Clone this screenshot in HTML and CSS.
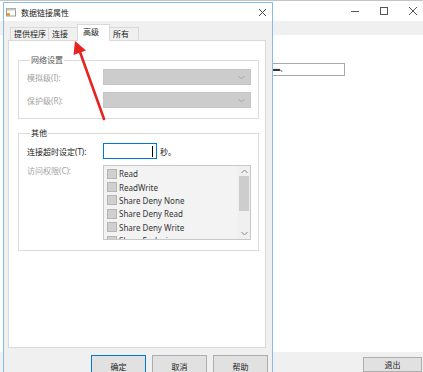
FILE: index.html
```html
<!DOCTYPE html>
<html lang="zh-CN">
<head>
  <meta charset="UTF-8">
  <title>数据链接属性</title>
  <link rel="stylesheet" href="styles.css">
</head>
<body>
  <div class="app">
    <div class="app-title">
      <svg class="ctl" width="10" height="10" viewBox="0 0 10 10"><path d="M1 5.5h8" stroke="#555" stroke-width="1"/></svg>
      <svg class="ctl" width="10" height="10" viewBox="0 0 10 10"><rect x="1.5" y="1.5" width="7" height="7" fill="none" stroke="#555" stroke-width="1"/></svg>
      <svg class="ctl" width="10" height="10" viewBox="0 0 10 10"><path d="M1 1l8 8M9 1l-8 8" stroke="#555" stroke-width="1"/></svg>
    </div>
    <div class="app-band"></div>
    <div class="app-body">
      <div class="app-field"><span class="app-val">▬、</span></div>
    </div>
    <div class="app-foot">
      <button class="btn">退出</button>
    </div>
  </div>

  <div class="dialog">
    <div class="dlg-title">
      <svg class="dlg-icon" width="10" height="10" viewBox="0 0 10 10">
        <rect x="0.5" y="1.5" width="9" height="7.5" fill="#fff" stroke="#9a9a9a"/>
        <rect x="0.5" y="1.5" width="9" height="2" fill="#c8c8c8"/>
        <rect x="1" y="6" width="3" height="3" fill="#e8a23a"/>
      </svg>
      <span class="dlg-name">数据链接属性</span>
      <svg class="dlg-close" width="9" height="9" viewBox="0 0 9 9"><path d="M1 1l7 7M8 1l-7 7" stroke="#444" stroke-width="1"/></svg>
    </div>
    <div class="dlg-body">
      <div class="tabs">
        <div class="tab t1">提供程序</div>
        <div class="tab t2">连接</div>
        <div class="tab t3 active">高级</div>
        <div class="tab t4">所有</div>
      </div>
      <div class="page">
        <fieldset class="group">
          <legend class="muted-legend">网络设置</legend>
          <div class="row">
            <span class="lbl disabled">模拟级(I):</span>
            <div class="combo"><svg width="7" height="5" viewBox="0 0 7 5"><path d="M0.5 1l3 3 3-3" fill="none" stroke="#a8a8a8"/></svg></div>
          </div>
          <div class="row">
            <span class="lbl disabled">保护级(R):</span>
            <div class="combo"><svg width="7" height="5" viewBox="0 0 7 5"><path d="M0.5 1l3 3 3-3" fill="none" stroke="#a8a8a8"/></svg></div>
          </div>
        </fieldset>

        <fieldset class="group other">
          <legend>其他</legend>
          <div class="row timeout">
            <span class="lbl">连接超时设定(T):</span>
            <div class="textbox"><span class="caret"></span></div>
            <span class="unit">秒。</span>
          </div>
          <div class="row access">
            <span class="lbl disabled">访问权限(C):</span>
            <div class="listbox">
              <ul class="items">
                <li><span class="chk"></span>Read</li>
                <li><span class="chk"></span>ReadWrite</li>
                <li><span class="chk"></span>Share Deny None</li>
                <li><span class="chk"></span>Share Deny Read</li>
                <li><span class="chk"></span>Share Deny Write</li>
                <li><span class="chk"></span>Share Exclusive</li>
              </ul>
              <div class="vscroll">
                <svg width="7" height="5" viewBox="0 0 7 5"><path d="M0.5 4l3-3 3 3" fill="none" stroke="#888"/></svg>
                <div class="thumb"></div>
                <svg class="down" width="7" height="5" viewBox="0 0 7 5"><path d="M0.5 1l3 3 3-3" fill="none" stroke="#888"/></svg>
              </div>
            </div>
          </div>
        </fieldset>
      </div>
      <div class="buttons">
        <button class="btn default">确定</button>
        <button class="btn">取消</button>
        <button class="btn">帮助</button>
      </div>
    </div>
  </div>

  <svg class="arrow" width="423" height="372" viewBox="0 0 423 372">
    <path d="M104 119L80 52" stroke="#e52421" stroke-width="2.6" stroke-linecap="round"/>
    <path d="M75 41L73.5 55L86 50.5Z" fill="#e52421"/>
  </svg>
</body>
</html>
```

FILE: styles.css
```css
* { box-sizing: border-box; }
body { margin: 0; width: 423px; height: 372px; overflow: hidden; position: relative; background: #fff; font-family: "Noto Sans", "Noto Sans CJK SC", sans-serif; font-size: 8px; color: #222; }

.app { height: 372px; display: flex; flex-direction: column; border-top: 1px solid #c4c4c4; }
.app-title { height: 20px; display: flex; justify-content: flex-end; align-items: center; gap: 19px; padding-right: 5px; }
.app-band { height: 14px; background: #f0f0f0; }
.app-body { flex: 1; padding-top: 28px; }
.app-field { margin-left: 250px; width: 95px; height: 13px; border: 1px solid #a9a9a9; padding-left: 22px; line-height: 10px; font-size: 7px; color: #333; }
.app-foot { height: 20px; background: #f0f0f0; display: flex; justify-content: flex-end; align-items: flex-end; padding-right: 1px; }
.app-foot .btn { width: 59px; height: 15px; }

.btn { font: inherit; color: #222; background: #e1e1e1; border: 1px solid #adadad; padding: 0; }
.btn.default { border-color: #0078d7; }

.dialog { position: absolute; left: 3px; top: 2px; width: 270px; height: 380px; border: 1px solid #86bbea; background: #f0f0f0; display: flex; flex-direction: column; }
.dlg-title { height: 18px; background: #fff; display: flex; align-items: center; padding: 0 5px 0 2px; }
.dlg-icon { margin-right: 5px; }
.dlg-name { flex: 1; color: #222; }

.dlg-body { flex: 1; }
.tabs { display: flex; align-items: flex-end; height: 19px; padding-left: 6px; }
.tab { height: 13px; line-height: 12px; padding-left: 3px; border: 1px solid #d9d9d9; border-bottom: none; background: #f0f0f0; margin-right: -1px; }
.tab.t1 { width: 39px; }
.tab.t2 { width: 30px; }
.tab.t3 { width: 33px; }
.tab.t4 { width: 30px; }
.tab.active { height: 16px; line-height: 13px; padding-left: 5px; background: #fff; position: relative; z-index: 1; margin-bottom: -1px; height: 17px; }

.page { margin-left: 4px; width: 258px; height: 308px; background: #fff; border: 1px solid #d9d9d9; padding: 13px 7px 0 9px; }

.group { margin: 0; border: 1px solid #dcdcdc; padding: 3px 7px 10px 8px; width: 241px; }
.group legend { padding: 0 1px; margin-left: 3px; line-height: 12px; color: #222; }
.group legend.muted-legend { color: #555; }
.group.other { margin-top: 8px; padding-top: 4px; }

.row { display: flex; align-items: center; }
.row + .row { margin-top: 7px; }
.lbl { width: 76px; flex-shrink: 0; }
.disabled { color: #a3a3a3; }

.combo { flex: 1; height: 16px; background: #cccccc; border: 1px solid #c6c6c6; display: flex; align-items: center; justify-content: flex-end; padding-right: 5px; }

.textbox { width: 54px; height: 16px; border: 1px solid #0078d7; background: #fff; display: flex; align-items: center; justify-content: flex-end; padding-right: 3px; }
.caret { width: 1px; height: 11px; background: #000; }
.unit { margin-left: 3px; }

.row.access { align-items: flex-start; margin-top: 6px; }
.listbox { flex: 1; height: 75px; border: 1px solid #c8c8c8; background: #f3f3f3; display: flex; overflow: hidden; }
.items { flex: 1; list-style: none; margin: 0; padding: 1px 0 0 3px; }
.items li { height: 13.4px; display: flex; align-items: center; color: #333; }
.chk { width: 10px; height: 10px; background: #d0d0d0; border: 1px solid #b4b4b4; margin-right: 2px; }
.vscroll { width: 12px; background: #f0f0f0; display: flex; flex-direction: column; align-items: center; padding-top: 3px; }
.thumb { width: 10px; height: 35px; background: #cdcdcd; margin-top: 2px; }
.vscroll .down { margin-top: auto; margin-bottom: 3px; }

.buttons { display: flex; justify-content: flex-end; gap: 6px; padding-right: 4px; margin-top: 7px; }
.buttons .btn { width: 55px; height: 23px; }

.arrow { position: absolute; left: 0; top: 0; pointer-events: none; }
```
